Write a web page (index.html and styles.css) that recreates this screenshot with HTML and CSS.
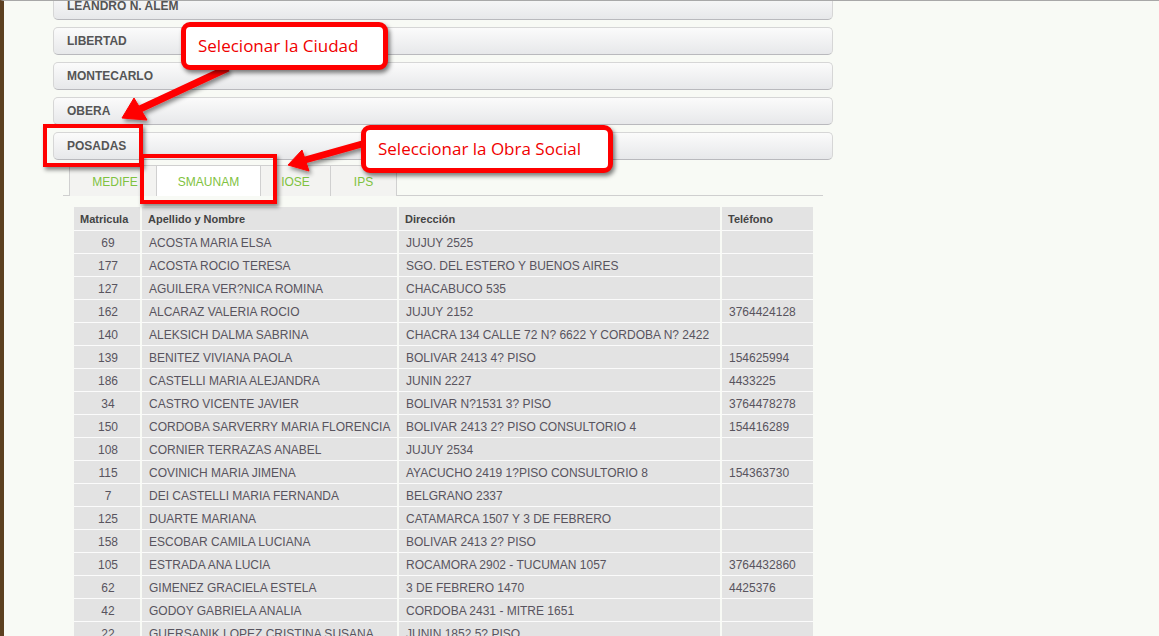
FILE: index.html
```html
<!DOCTYPE html>
<html lang="es">
<head>
    <meta charset="UTF-8">
    <title>Prestadores por Ciudad</title>
    <link rel="stylesheet" href="styles.css">
</head>
<body>
    <div class="page">
        <div class="accordion">
            <div class="city">LEANDRO N. ALEM</div>
            <div class="city">LIBERTAD</div>
            <div class="city">MONTECARLO</div>
            <div class="city">OBERA</div>
            <div class="city">POSADAS</div>
        </div>

        <div class="panel">
            <ul class="tabs">
                <li class="tab">MEDIFE</li>
                <li class="tab active">SMAUNAM</li>
                <li class="tab">IOSE</li>
                <li class="tab">IPS</li>
            </ul>

            <table class="grid">
                <thead>
                    <tr>
                        <th class="col-mat">Matricula</th>
                        <th class="col-name">Apellido y Nombre</th>
                        <th class="col-dir">Dirección</th>
                        <th class="col-tel">Teléfono</th>
                    </tr>
                </thead>
                <tbody>
                    <tr><td class="num">69</td><td>ACOSTA MARIA ELSA</td><td>JUJUY 2525</td><td></td></tr>
                    <tr><td class="num">177</td><td>ACOSTA ROCIO TERESA</td><td>SGO. DEL ESTERO Y BUENOS AIRES</td><td></td></tr>
                    <tr><td class="num">127</td><td>AGUILERA VER?NICA ROMINA</td><td>CHACABUCO 535</td><td></td></tr>
                    <tr><td class="num">162</td><td>ALCARAZ VALERIA ROCIO</td><td>JUJUY 2152</td><td>3764424128</td></tr>
                    <tr><td class="num">140</td><td>ALEKSICH DALMA SABRINA</td><td>CHACRA 134 CALLE 72 N? 6622 Y CORDOBA N? 2422</td><td></td></tr>
                    <tr><td class="num">139</td><td>BENITEZ VIVIANA PAOLA</td><td>BOLIVAR 2413 4? PISO</td><td>154625994</td></tr>
                    <tr><td class="num">186</td><td>CASTELLI MARIA ALEJANDRA</td><td>JUNIN 2227</td><td>4433225</td></tr>
                    <tr><td class="num">34</td><td>CASTRO VICENTE JAVIER</td><td>BOLIVAR N?1531 3? PISO</td><td>3764478278</td></tr>
                    <tr><td class="num">150</td><td>CORDOBA SARVERRY MARIA FLORENCIA</td><td>BOLIVAR 2413 2? PISO CONSULTORIO 4</td><td>154416289</td></tr>
                    <tr><td class="num">108</td><td>CORNIER TERRAZAS ANABEL</td><td>JUJUY 2534</td><td></td></tr>
                    <tr><td class="num">115</td><td>COVINICH MARIA JIMENA</td><td>AYACUCHO 2419 1?PISO CONSULTORIO 8</td><td>154363730</td></tr>
                    <tr><td class="num">7</td><td>DEI CASTELLI MARIA FERNANDA</td><td>BELGRANO 2337</td><td></td></tr>
                    <tr><td class="num">125</td><td>DUARTE MARIANA</td><td>CATAMARCA 1507 Y 3 DE FEBRERO</td><td></td></tr>
                    <tr><td class="num">158</td><td>ESCOBAR CAMILA LUCIANA</td><td>BOLIVAR 2413 2? PISO</td><td></td></tr>
                    <tr><td class="num">105</td><td>ESTRADA ANA LUCIA</td><td>ROCAMORA 2902 - TUCUMAN 1057</td><td>3764432860</td></tr>
                    <tr><td class="num">62</td><td>GIMENEZ GRACIELA ESTELA</td><td>3 DE FEBRERO 1470</td><td>4425376</td></tr>
                    <tr><td class="num">42</td><td>GODOY GABRIELA ANALIA</td><td>CORDOBA 2431 - MITRE 1651</td><td></td></tr>
                    <tr><td class="num">22</td><td>GUERSANIK LOPEZ CRISTINA SUSANA</td><td>JUNIN 1852 5? PISO</td><td></td></tr>
                </tbody>
            </table>
        </div>
    </div>

    <!-- annotations drawn over the screenshot -->
    <div class="mark mark-city"></div>
    <div class="mark mark-tab"></div>

    <svg class="arrows" width="1159" height="636" viewBox="0 0 1159 636">
        <defs>
            <filter id="shadow" x="-20%" y="-20%" width="140%" height="140%">
                <feDropShadow dx="2" dy="3" stdDeviation="2" flood-color="#000" flood-opacity="0.45"/>
            </filter>
        </defs>
        <g fill="#f00" stroke="#f00" filter="url(#shadow)">
            <line x1="228" y1="68" x2="140" y2="109" stroke-width="7"/>
            <polygon points="122,118 134,98 147,120" stroke-width="1" stroke-linejoin="round"/>
            <line x1="362" y1="144" x2="305" y2="160" stroke-width="7"/>
            <polygon points="288,165 302,150 309,171" stroke-width="1" stroke-linejoin="round"/>
        </g>
    </svg>

    <div class="callout callout-city">Selecionar la Ciudad</div>
    <div class="callout callout-social">Seleccionar la Obra Social</div>
</body>
</html>
```

FILE: styles.css
```css
body {
    margin: 0;
    font-family: "Liberation Sans", Arial, sans-serif;
    background-color: #f8faf5;
    border-left: 4px solid #5c4020;
    border-top: 1px solid #a8a8a8;
    min-height: 636px;
    overflow: hidden;
}

.page {
    padding-left: 49px;
    margin-top: -9px;
}

.accordion {
    width: 780px;
}

.city {
    box-sizing: border-box;
    height: 28px;
    margin-bottom: 7px;
    padding-left: 13px;
    line-height: 27px;
    font-size: 12px;
    font-weight: bold;
    color: #555555;
    border: 1px solid #d6d6d6;
    border-bottom-color: #b9b9bd;
    border-radius: 5px;
    background: linear-gradient(to bottom, #fbfbfb, #e7e8ea);
}

.panel {
    margin-left: 10px;
    margin-top: -2px;
}

.tabs {
    list-style: none;
    margin: 0;
    padding: 0 0 0 6px;
    width: 754px;
    height: 30px;
    display: flex;
    border-bottom: 1px solid #cfcfcf;
}

.tab {
    box-sizing: border-box;
    height: 31px;
    padding-top: 2px;
    line-height: 29px;
    text-align: center;
    font-size: 12px;
    color: #7fc241;
    background-color: #f3f3f1;
    border: 1px solid #d0d0d0;
    border-bottom: none;
    border-left: none;
}

.tab:first-child {
    width: 88px;
    padding-left: 4px;
    border-left: 1px solid #d0d0d0;
}

.tab:nth-child(2) { width: 104px; }
.tab:nth-child(3) { width: 70px; }
.tab:nth-child(4) { width: 66px; }

.tab.active {
    background-color: #ffffff;
}

.grid {
    margin: 11px 0 0 11px;
    border-collapse: separate;
    border-spacing: 0;
    table-layout: fixed;
    width: 739px;
    font-size: 12px;
    color: #58545e;
}

.grid th,
.grid td {
    box-sizing: border-box;
    background-color: #e3e3e3;
    border-right: 2px solid #f8faf5;
    border-bottom: 1px solid #fbfbfb;
    padding: 0 5px 0 7px;
    text-align: left;
    white-space: nowrap;
    overflow: hidden;
}

.grid th {
    height: 24px;
    padding-left: 6px;
    font-size: 11px;
    color: #444444;
}

.grid td {
    height: 23px;
    padding-top: 2px;
}

.grid td.num {
    text-align: center;
}

.col-mat { width: 68px; }
.col-name { width: 257px; }
.col-dir { width: 323px; }
.col-tel { width: 91px; }

.grid th:last-child,
.grid td:last-child {
    border-right: none;
}

/* red annotation marks */
.mark {
    position: absolute;
    border: 4px solid #f00;
    box-shadow: 2px 3px 4px rgba(0, 0, 0, 0.45);
}

.mark-city {
    left: 43px;
    top: 124px;
    width: 92px;
    height: 35px;
}

.mark-tab {
    left: 140px;
    top: 154px;
    width: 129px;
    height: 42px;
}

.arrows {
    position: absolute;
    left: 0;
    top: 0;
    pointer-events: none;
}

.callout {
    position: absolute;
    box-sizing: border-box;
    height: 48px;
    padding-left: 12px;
    line-height: 38px;
    font-family: "Open Sans", "Noto Sans", sans-serif;
    font-size: 17px;
    color: #f00000;
    background-color: #ffffff;
    border: 5px solid #f00;
    border-radius: 9px;
    box-shadow: 2px 3px 4px rgba(0, 0, 0, 0.5);
}

.callout-city {
    left: 181px;
    top: 22px;
    width: 207px;
}

.callout-social {
    left: 361px;
    top: 125px;
    width: 252px;
}
```
